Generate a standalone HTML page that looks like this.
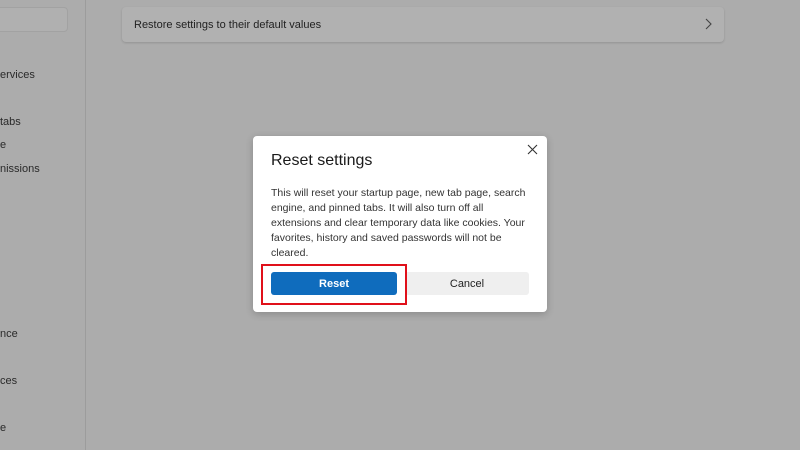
<!DOCTYPE html>
<html><head><style>
body{margin:0;width:800px;height:450px;background:#acacac;font-family:"Liberation Sans",sans-serif;position:relative;overflow:hidden;color:#1a1a1a}
.a{position:absolute}
.side{font-size:11px;color:#2a2a2a}
</style></head><body>
<div class="a" style="left:0;top:0;width:85px;height:450px;border-right:1px solid #9c9c9c"></div>
<div class="a" style="left:-5px;top:7px;width:71px;height:23px;border:1px solid #a2a2a2;border-radius:4px;background:#b0b0b0"></div>
<div class="a side" style="left:0;top:69px">ervices</div>
<div class="a side" style="left:0;top:116px">tabs</div>
<div class="a side" style="left:0;top:139px">e</div>
<div class="a side" style="left:0;top:163px">nissions</div>
<div class="a side" style="left:0;top:328px">nce</div>
<div class="a side" style="left:0;top:375px">ces</div>
<div class="a side" style="left:0;top:422px">e</div>
<div class="a" style="left:122px;top:7px;width:602px;height:35px;background:#b1b1b1;border-radius:4px;box-shadow:0 1px 2px rgba(0,0,0,.15)"></div>
<div class="a" style="left:134px;top:19px;font-size:11px;color:#222">Restore settings to their default values</div>
<svg class="a" style="left:704px;top:18px" width="8" height="12"><path d="M2 1L7 6L2 11" stroke="#444" stroke-width="1.1" fill="none"/></svg>
<div class="a" style="left:253px;top:136px;width:294px;height:176px;background:#fff;border-radius:4px;box-shadow:0 2px 8px rgba(0,0,0,.2)"></div>
<svg class="a" style="left:527px;top:144px" width="11" height="11"><path d="M1 1L10 10M10 1L1 10" stroke="#333" stroke-width="1.1"/></svg>
<div class="a" style="left:271px;top:152px;font-size:16px;color:#1a1a1a">Reset settings</div>
<div class="a" style="left:271px;top:186px;width:265px;font-size:10.5px;line-height:15px;color:#333">This will reset your startup page, new tab page, search engine, and pinned tabs. It will also turn off all extensions and clear temporary data like cookies. Your favorites, history and saved passwords will not be cleared.</div>
<div class="a" style="left:405px;top:272px;width:124px;height:23px;background:#efefef;border-radius:3px;font-size:11px;line-height:24px;text-align:center;color:#222">Cancel</div>
<div class="a" style="left:271px;top:272px;width:126px;height:23px;background:#0f6cbd;border-radius:3px;font-size:11px;font-weight:bold;line-height:24px;text-align:center;color:#fff">Reset</div>
<div class="a" style="left:261px;top:264px;width:142px;height:37px;border:2px solid #e0101a"></div>
</body></html>
